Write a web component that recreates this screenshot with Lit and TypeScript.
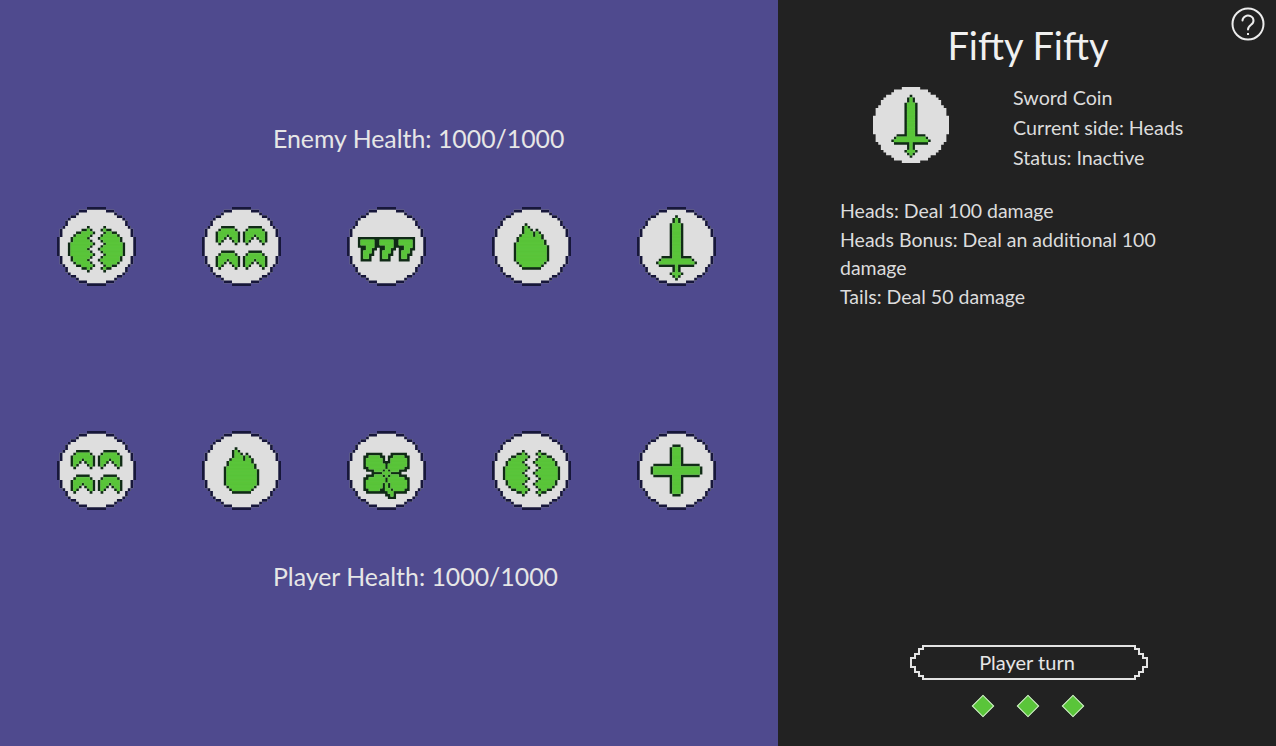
import { LitElement, html, css, svg } from "lit";
import { customElement, property } from "lit/decorators.js";

const N = 29;
type Pred = (x: number, y: number) => boolean;

const fromRows = (rows: Record<number, number[][]>): Pred => (x, y) =>
  (rows[y] || []).some(([a, b]) => x >= a && x <= b);

const fromArt = (left: number, top: number, art: string[]): Pred => (x, y) => {
  const r = art[y - top];
  return !!r && r[x - left] === "#";
};

const crescent = (cx: number, top: number): Pred => {
  const shape = [[[-2, 2]], [[-3, 3]], [[-3, -1], [1, 3]], [[-3, -2], [2, 3]], [[-3, -3], [3, 3]]];
  return (x, y) => {
    const r = shape[y - top];
    return !!r && r.some(([a, b]) => x - cx >= a && x - cx <= b);
  };
};

const seven = (o: number): Pred =>
  fromRows({
    12: [[o, o + 4]],
    13: [[o, o + 4]],
    14: [[o + 2, o + 4]],
    15: [[o + 2, o + 3]],
    16: [[o + 1, o + 3]],
    17: [[o + 1, o + 2]],
    18: [[o + 1, o + 2]],
  });

const ICONS: Record<string, Pred> = {
  split: (x, y) => {
    const inE = ((x - 14) / 9.6) ** 2 + ((y - 15) / 7.6) ** 2 <= 1;
    const zig = [0, 1, 0, -1][y % 4];
    return inE && Math.abs(x - 14 - zig) > 2;
  },
  wings: (x, y) =>
    [crescent(9, 8), crescent(19, 8), crescent(9, 17), crescent(19, 17)].some((p) => p(x, y)),
  sevens: (x, y) => [5, 12, 19].some((o) => seven(o)(x, y)),
  flame: fromRows({
    7: [[12, 12]],
    8: [[12, 13]],
    9: [[12, 14], [16, 16]],
    10: [[11, 14], [16, 17]],
    11: [[10, 17]],
    12: [[10, 18]],
    13: [[9, 18]],
    14: [[9, 19]],
    15: [[9, 19]],
    16: [[9, 19]],
    17: [[9, 19]],
    18: [[9, 19]],
    19: [[9, 19]],
    20: [[10, 18]],
    21: [[11, 17]],
  }),
  sword: fromRows({
    4: [[14, 14]],
    5: [[14, 14]],
    ...Object.fromEntries(Array.from({ length: 13 }, (_, i) => [i + 6, [[13, 15]]])),
    19: [[9, 19]],
    20: [[8, 20]],
    21: [[14, 14]],
    22: [[14, 14]],
    23: [[14, 14]],
    24: [[13, 15]],
    25: [[14, 14]],
  }),
  clover: fromArt(7, 9, [
    ".####.....####.",
    "######...######",
    "######...######",
    "#######.#######",
    ".######.######.",
    "...###.#.###...",
    "......###......",
    "...###.#.###...",
    ".######.######.",
    "#######.#######",
    "######.#.######",
    "######.#.######",
    ".####..##.####.",
    "........##.....",
    ".........#.....",
  ]),
  plus: (x, y) =>
    (x >= 13 && x <= 15 && y >= 6 && y <= 22) || (y >= 13 && y <= 15 && x >= 6 && x <= 22),
};

function toPath(test: Pred): string {
  let d = "";
  for (let y = 0; y < N; y++) {
    let start = -1;
    for (let x = 0; x <= N; x++) {
      const on = x < N && test(x, y);
      if (on && start < 0) start = x;
      if (!on && start >= 0) {
        d += `M${start} ${y}H${x}V${y + 1}H${start}Z`;
        start = -1;
      }
    }
  }
  return d;
}

const inDisc: Pred = (x, y) => Math.hypot(x - 14, y - 14) <= 14.4;
const around = (p: Pred): Pred => (x, y) =>
  !p(x, y) && (p(x - 1, y) || p(x + 1, y) || p(x, y - 1) || p(x, y + 1));
const neighbours8 = (p: Pred): Pred => (x, y) =>
  !p(x, y) && [-1, 0, 1].some((a) => [-1, 0, 1].some((b) => p(x + a, y + b)));

@customElement("pixel-coin")
export class PixelCoin extends LitElement {
  @property() icon = "plus";
  @property({ type: Number }) size = 79;
  @property({ type: Boolean }) bare = false;
  static styles = css`
    :host { display: block; line-height: 0; }
    .disc { fill: #dedede; }
    .rim { fill: #17173a; }
    .line { fill: #102a16; }
    .green { fill: #5ac53a; stroke: #5ac53a; stroke-width: 0.16; }
  `;
  render() {
    const p = ICONS[this.icon];
    const rim: Pred = (x, y) =>
      inDisc(x, y) && (!inDisc(x - 1, y) || !inDisc(x + 1, y) || !inDisc(x, y - 1) || !inDisc(x, y + 1));
    return html`<svg width=${this.size} height=${this.size} viewBox="0 0 ${N} ${N}">
      ${svg`<path class="disc" d=${toPath(inDisc)}></path>
      ${this.bare ? "" : svg`<path class="rim" d=${toPath(rim)}></path>`}
      <path class="line" d=${toPath(this.icon === "sevens" || this.icon === "clover" ? neighbours8(p) : around(p))}></path>
      <path class="green" d=${toPath(p)}></path>`}
    </svg>`;
  }
}

const TOP = ["split", "wings", "sevens", "flame", "sword"];
const BOTTOM = ["wings", "flame", "clover", "split", "plus"];

@customElement("app-root")
export class AppRoot extends LitElement {
  static styles = css`
    :host {
      display: grid;
      grid-template-columns: 778px 498px;
      height: 746px;
      overflow: hidden;
      font-family: Lato, "Open Sans", sans-serif;
      color: #e6e6e6;
      position: relative;
    }
    .board {
      background: #4f4a8e;
      display: flex;
      flex-direction: column;
    }
    .health {
      font-size: 24.85px;
      line-height: 30px;
      padding-left: 273px;
    }
    .enemy { margin-top: 123px; }
    .player { margin-top: 51px; }
    .row {
      display: grid;
      grid-template-columns: repeat(5, 145px);
      padding-left: 24px;
      justify-items: center;
    }
    .row.first { margin-top: 54px; }
    .row.second { margin-top: 145px; }
    .side {
      background: #222222;
      display: flex;
      flex-direction: column;
      padding-left: 62px;
      padding-right: 60px;
    }
    h1 {
      margin: 22px 0 0;
      font-size: 38px;
      line-height: 46px;
      font-weight: 400;
      width: 376px;
      text-align: center;
      color: #f0f0f0;
      white-space: nowrap;
    }
    .detail {
      display: flex;
      margin-top: 15px;
      padding-left: 33px;
      align-items: flex-start;
    }
    .detail pixel-coin { margin-top: 4px; }
    .facts {
      margin-left: 64px;
      font-size: 19.7px;
      line-height: 30px;
      color: #dcdcdc;
      white-space: nowrap;
    }
    .desc {
      margin-top: 24px;
      font-size: 19.5px;
      line-height: 28.7px;
      width: 335px;
      color: #dcdcdc;
    }
    .foot {
      margin-top: auto;
      width: 376px;
      display: flex;
      flex-direction: column;
      align-items: center;
      padding-bottom: 32px;
    }
    .turn {
      width: 238px;
      height: 36px;
      display: grid;
      place-items: center;
      font-size: 20px;
      color: #e6e6e6;
      margin-left: 2px;
    }
    .turn > * { grid-area: 1 / 1; }
    .turn span { margin-top: -2px; margin-right: 4px; }
    .pips {
      display: flex;
      gap: 29px;
      margin-top: 17px;
    }
    .pip {
      width: 16px;
      height: 16px;
      box-sizing: border-box;
      background: #5ac53a;
      border: 1.5px solid #d8e8d4;
      transform: rotate(45deg);
    }
    .help {
      position: absolute;
      right: 11px;
      top: 7px;
      width: 34px;
      height: 34px;
    }
  `;
  render() {
    return html`
      <section class="board">
        <div class="health enemy">Enemy Health: 1000/1000</div>
        <div class="row first">${TOP.map((i) => html`<pixel-coin icon=${i}></pixel-coin>`)}</div>
        <div class="row second">${BOTTOM.map((i) => html`<pixel-coin icon=${i}></pixel-coin>`)}</div>
        <div class="health player">Player Health: 1000/1000</div>
      </section>
      <section class="side">
        <h1>Fifty Fifty</h1>
        <div class="detail">
          <pixel-coin icon="sword" size="76" bare></pixel-coin>
          <div class="facts">
            <div>Sword Coin</div>
            <div>Current side: Heads</div>
            <div>Status: Inactive</div>
          </div>
        </div>
        <div class="desc">
          Heads: Deal 100 damage<br />
          Heads Bonus: Deal an additional 100 damage<br />
          Tails: Deal 50 damage
        </div>
        <div class="foot">
          <div class="turn">
            <svg width="238" height="36" viewBox="0 0 238 36" fill="none" stroke="#e4e4e4" stroke-width="2">
              <path d="M13 1H225V4H229V9H233V13H237V22H233V27H229V31H225V34H13V31H9V27H5V22H1V13H5V9H9V4H13Z"></path>
            </svg>
            <span>Player turn</span>
          </div>
          <div class="pips"><div class="pip"></div><div class="pip"></div><div class="pip"></div></div>
        </div>
      </section>
      <svg class="help" viewBox="0 0 34 34" fill="none" stroke="#ececec" stroke-width="2">
        <circle cx="17" cy="17" r="15.5"></circle>
        <path d="M11.5 13.5a5.5 5 0 1 1 8.6 4.2c-2 1.4-3.1 2.4-3.1 4.8" stroke-linecap="round"></path>
        <path d="M17 26v2"></path>
      </svg>
    `;
  }
}
